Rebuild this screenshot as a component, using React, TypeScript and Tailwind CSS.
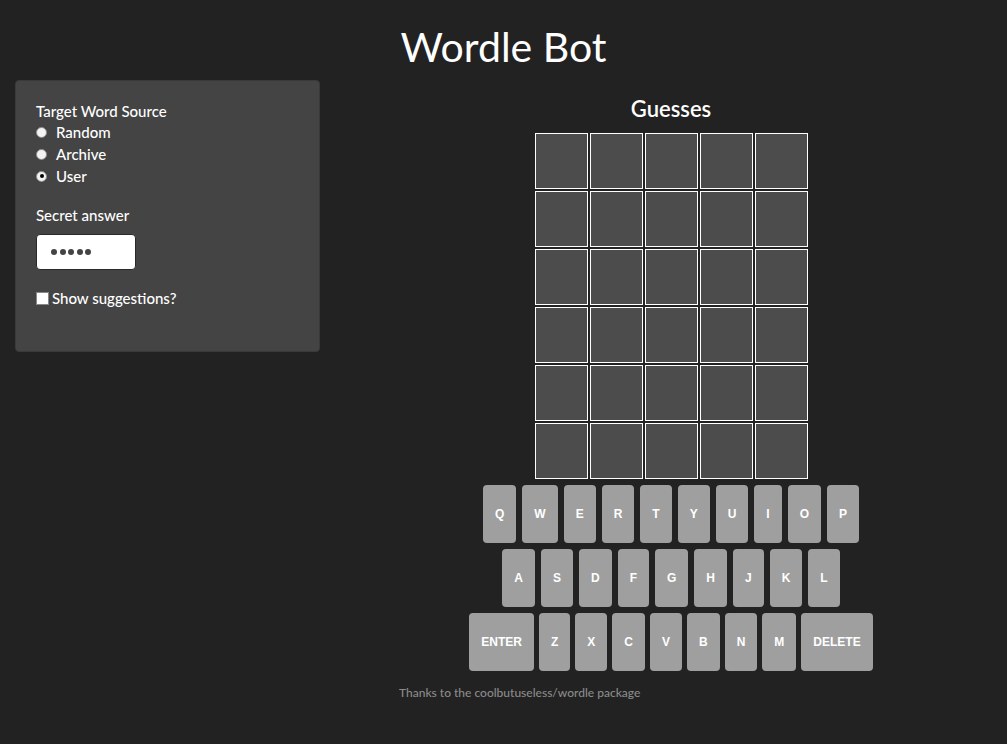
import React from "react";

const rows = [
  ["Q", "W", "E", "R", "T", "Y", "U", "I", "O", "P"],
  ["A", "S", "D", "F", "G", "H", "J", "K", "L"],
  ["ENTER", "Z", "X", "C", "V", "B", "N", "M", "DELETE"],
];

function Radio({ label, checked }: { label: string; checked?: boolean }) {
  return (
    <div className="flex items-center h-[22px]">
      <span className="w-[11px] h-[11px] rounded-full bg-[#f4f4f4] border border-[#8c8c8c] flex items-center justify-center shrink-0">
        {checked ? <span className="w-[4px] h-[4px] rounded-full bg-black" /> : null}
      </span>
      <span className="ml-[9px] text-[15px] leading-[20px] font-medium">{label}</span>
    </div>
  );
}

export default function App() {
  return (
    <div
      className="min-h-screen bg-[#222222] text-white"
      style={{ fontFamily: "Lato, 'Open Sans', sans-serif" }}
    >
      <h1 className="pt-[24px] text-center text-[41px] leading-[45px] font-normal">Wordle Bot</h1>
      <div className="flex mt-[11px]">
        <div className="w-[335px] pl-[15px] pr-[15px] shrink-0">
          <div className="w-[305px] h-[272px] bg-[#444444] border border-[#3a3a3a] rounded-[4px] pl-[20px] pt-[20px]">
            <div className="text-[15px] leading-[20px] font-medium">Target Word Source</div>
            <Radio label="Random" />
            <Radio label="Archive" />
            <Radio label="User" checked />
            <div className="mt-[18px] text-[15px] leading-[20px] font-medium">Secret answer</div>
            <div className="mt-[9px] w-[100px] h-[36px] bg-white border border-[#2a2a2a] rounded-[4px] flex items-center pl-[14px] gap-[2.5px]">
              {[0, 1, 2, 3, 4].map((i) => (
                <span key={i} className="w-[6px] h-[6px] rounded-full bg-[#444]" />
              ))}
            </div>
            <div className="mt-[18px] flex items-center h-[20px]">
              <span className="w-[13px] h-[13px] bg-white border border-[#888] shrink-0" />
              <span className="ml-[3px] text-[15px] leading-[20px] font-medium">Show suggestions?</span>
            </div>
          </div>
        </div>
        <div className="flex-1 flex flex-col items-center">
          <h3 className="mt-[17px] text-[22px] leading-[24px] font-semibold">Guesses</h3>
          <div className="mt-[12px] grid grid-cols-[repeat(5,53px)] gap-[2px]">
            {Array.from({ length: 30 }).map((_, i) => (
              <div key={i} className="h-[56px] border border-white bg-[#4c4c4c]" />
            ))}
          </div>
          <div
            className="mt-[6px] flex flex-col items-center gap-[6px]"
            style={{ fontFamily: "'Liberation Sans', Arial, sans-serif" }}
          >
            {rows.map((row, ri) => (
              <div key={ri} className={ri === 2 ? "flex gap-[5px]" : "flex gap-[6px]"}>
                {row.map((k) => (
                  <div
                    key={k}
                    className="h-[58px] px-3 rounded-[4px] bg-[#9f9f9f] text-white text-[12px] font-bold flex items-center justify-center"
                  >
                    {k}
                  </div>
                ))}
              </div>
            ))}
          </div>
          <div className="self-start ml-[64px] mt-[15px] text-[12px] leading-[14px] font-medium text-[#8a8a8a]">
            Thanks to the coolbutuseless/wordle package
          </div>
        </div>
      </div>
    </div>
  );
}
